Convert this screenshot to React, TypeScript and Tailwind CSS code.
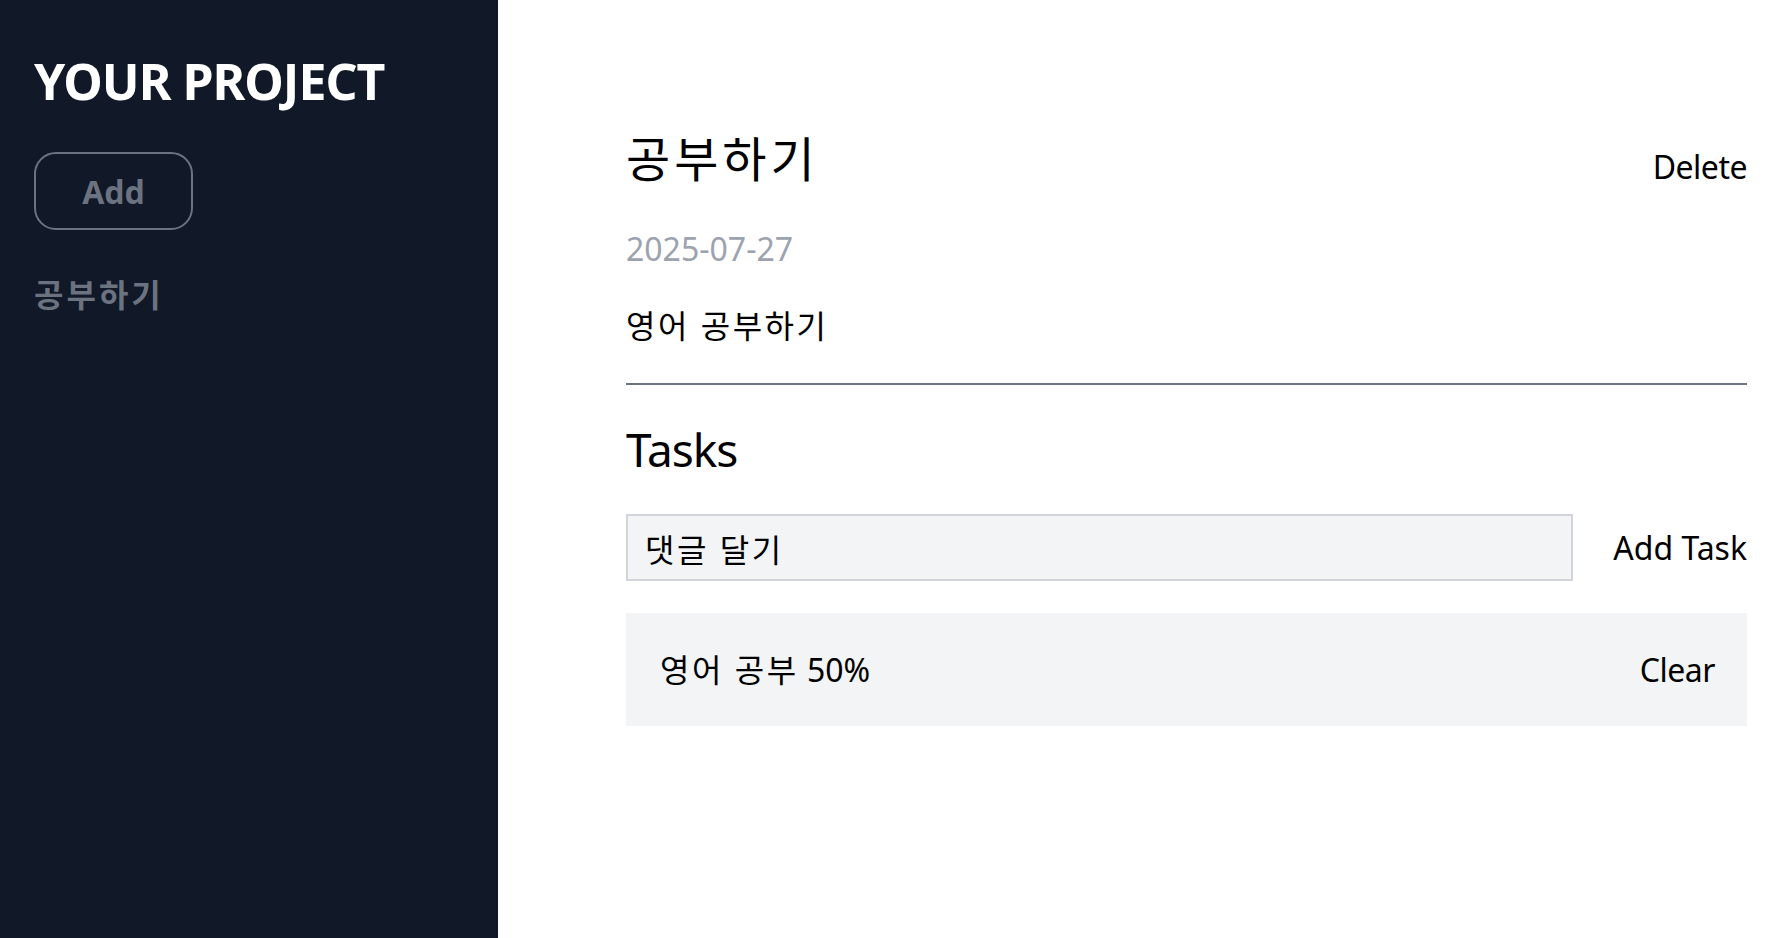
export default function App() {
  const font = { fontFamily: '"Noto Sans", "Noto Sans CJK KR", sans-serif' };
  return (
    <div className="flex h-[938px] w-full bg-white" style={font}>
      <aside className="w-[498px] shrink-0 bg-[#111827] pl-[34px] pt-[56px]">
        <h2 className="text-[50px] font-bold leading-none tracking-[-1px] text-white">YOUR PROJECT</h2>
        <button className="mt-[46px] flex h-[78px] w-[159px] items-center justify-center rounded-[22px] border-2 border-[#6b7280] pt-[2px] text-[32px] font-bold leading-none text-[#6b7280]">
          Add
        </button>
        <ul className="mt-[49px]">
          <li className="text-[32px] font-bold leading-none tracking-[3px] text-[#6b7280]">공부하기</li>
        </ul>
      </aside>
      <main className="flex-1 pl-[128px] pr-[23px] pt-[135px]">
        <div className="flex w-[1121px] flex-col">
          <header className="flex items-end justify-between">
            <h1 className="text-[48px] font-normal leading-none tracking-[4px] text-black">공부하기</h1>
            <button className="text-[32px] leading-none tracking-[-0.5px] text-black">Delete</button>
          </header>
          <p className="mt-[50px] text-[32px] leading-none text-[#9ca3af]">2025-07-27</p>
          <p className="mt-[45px] text-[32px] leading-none tracking-[2.5px] text-black">영어 공부하기</p>
          <div className="mt-[41px] h-[2px] w-full bg-[#6b7280]" />
          <h2 className="mt-[41px] text-[46px] leading-none tracking-[-1px] text-black">Tasks</h2>
          <div className="mt-[42px] flex items-center justify-between">
            <input
              defaultValue="댓글 달기"
              className="h-[67px] w-[947px] border-2 border-[#d1d5db] bg-[#f3f4f6] pl-[17px] text-[32px] tracking-[2.5px] text-black outline-none"
              style={font}
            />
            <button className="text-[32px] leading-none text-black">Add Task</button>
          </div>
          <ul className="mt-[32px]">
            <li className="flex h-[113px] items-center justify-between bg-[#f3f4f6] pl-[34px] pr-[32px]">
              <span className="text-[32px] leading-none text-black">
                <span className="tracking-[2.5px]">영어 공부</span> 50%
              </span>
              <button className="text-[32px] leading-none tracking-[-0.5px] text-black">Clear</button>
            </li>
          </ul>
        </div>
      </main>
    </div>
  );
}
